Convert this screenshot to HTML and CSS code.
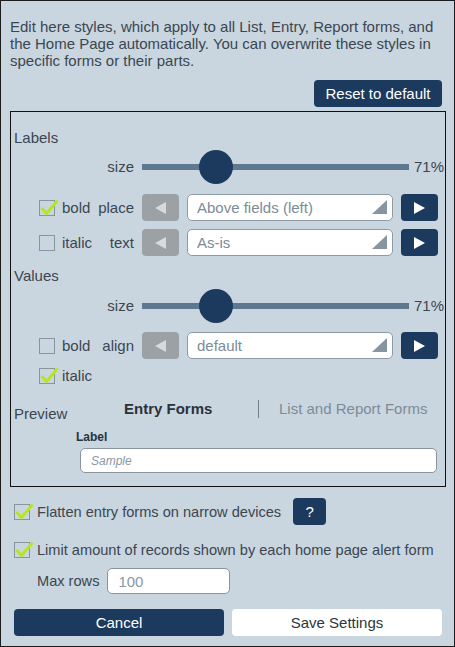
FILE: index.html
```html
<!DOCTYPE html>
<html lang="en">
<head>
  <meta charset="UTF-8" />
  <title>Form styles</title>
  <link rel="stylesheet" href="styles.css">
</head>
<body>

  <div class="panel">
    <p class="intro">Edit here styles, which apply to all List, Entry, Report forms, and the Home Page automatically. You can overwrite these styles in specific forms or their parts.</p>

    <div class="reset-row">
      <button class="btn btn-dark reset">Reset to default</button>
    </div>

    <!-- Styles box -->
    <div class="style-box">
      <div class="group-title">Labels</div>

      <div class="row slider-row">
        <div class="lead"><span class="name">size</span></div>
        <div class="track"><span class="thumb"></span></div>
        <span class="pct">71%</span>
      </div>

      <div class="row row-gap-lg">
        <div class="lead">
          <span class="check">
            <span class="box"><svg viewBox="0 0 16 16"><path d="M2.5 8 L7.5 13.5 L18.5 0.5" /></svg></span>bold
          </span>
          <span class="name">place</span>
        </div>
        <button class="arrow arrow-prev"></button>
        <div class="select">Above fields (left)</div>
        <button class="arrow arrow-next"></button>
      </div>

      <div class="row row-gap-sm">
        <div class="lead">
          <span class="check"><span class="box"></span>italic</span>
          <span class="name">text</span>
        </div>
        <button class="arrow arrow-prev"></button>
        <div class="select">As-is</div>
        <button class="arrow arrow-next"></button>
      </div>

      <div class="group-title values-title">Values</div>

      <div class="row slider-row slider-row-2">
        <div class="lead"><span class="name">size</span></div>
        <div class="track"><span class="thumb"></span></div>
        <span class="pct">71%</span>
      </div>

      <div class="row row-gap-md">
        <div class="lead">
          <span class="check"><span class="box"></span>bold</span>
          <span class="name">align</span>
        </div>
        <button class="arrow arrow-prev"></button>
        <div class="select">default</div>
        <button class="arrow arrow-next"></button>
      </div>

      <div class="row row-italic">
        <div class="lead">
          <span class="check">
            <span class="box"><svg viewBox="0 0 16 16"><path d="M2.5 8 L7.5 13.5 L18.5 0.5" /></svg></span>italic
          </span>
        </div>
      </div>

      <!-- Preview -->
      <div class="preview-head">
        <span class="preview-title">Preview</span>
        <span class="tab tab-active">Entry Forms</span>
        <span class="tab">List and Report Forms</span>
      </div>
      <div class="preview-label">Label</div>
      <input class="preview-input" type="text" placeholder="Sample" />
    </div>

    <!-- Options -->
    <div class="option option-flatten">
      <span class="check">
        <span class="box"><svg viewBox="0 0 16 16"><path d="M2.5 8 L7.5 13.5 L18.5 0.5" /></svg></span>Flatten entry forms on narrow devices
      </span>
      <button class="btn btn-dark help">?</button>
    </div>

    <div class="option option-limit">
      <span class="check">
        <span class="box"><svg viewBox="0 0 16 16"><path d="M2.5 8 L7.5 13.5 L18.5 0.5" /></svg></span>Limit amount of records shown by each home page alert form
      </span>
    </div>

    <div class="max-rows">
      <span>Max rows</span>
      <input class="rows-input" type="text" placeholder="100" />
    </div>

    <div class="actions">
      <button class="btn btn-dark">Cancel</button>
      <button class="btn btn-light">Save Settings</button>
    </div>
  </div>

</body>
</html>
```

FILE: styles.css
```css
/* General */
body, html {
  margin: 0;
  padding: 0;
  font-family: "Liberation Sans", Arial, sans-serif;
  font-size: 15px;
  color: #3b4650;
}

.panel {
  width: 455px;
  height: 647px;
  box-sizing: border-box;
  border: 1px solid #1c1c1c;
  background: #c9d6e0;
  padding: 17px 8px 0 9px;
}

.intro {
  margin: 0;
  width: 425px;
  line-height: 17px;
}

/* Buttons */
.btn {
  font-family: inherit;
  font-size: 15px;
  border: none;
  border-radius: 4px;
  height: 27px;
  padding: 0;
  cursor: pointer;
}
.btn-dark {
  background: #1b3a5e;
  color: #fff;
}
.btn-light {
  background: #fff;
  color: #2c3640;
}

.reset-row {
  display: flex;
  justify-content: flex-end;
  margin-top: 11px;
  padding-right: 4px;
}
.reset {
  width: 128px;
}

/* Styles box */
.style-box {
  margin-top: 4px;
  border: 1px solid #111;
  padding: 17px 0 13px 3px;
}

.group-title {
  line-height: 18px;
}
.values-title {
  margin-top: 11px;
}

.row {
  display: flex;
  align-items: center;
  line-height: 18px;
}
.row-gap-lg { margin-top: 10px; }
.row-gap-sm { margin-top: 8px; }
.row-gap-md { margin-top: 9px; }
.row-italic { margin-top: 8px; }

.lead {
  width: 120px;
  flex: none;
  box-sizing: border-box;
  padding-left: 25px;
  display: flex;
  align-items: center;
}
.lead .name {
  margin-left: auto;
}

/* Checkbox */
.check {
  display: flex;
  align-items: center;
  gap: 7px;
}
.box {
  position: relative;
  width: 16px;
  height: 16px;
  box-sizing: border-box;
  border: 1px solid #8a949c;
  flex: none;
}
.box svg {
  position: absolute;
  left: -1px;
  top: -1px;
  width: 16px;
  height: 16px;
  overflow: visible;
}
.box path {
  fill: none;
  stroke: #b6e61e;
  stroke-width: 3;
}

/* Slider */
.slider-row {
  margin-top: 3px;
  height: 34px;
}
.slider-row-2 {
  margin-top: 4px;
}
.track {
  position: relative;
  flex: none;
  width: 267px;
  height: 6px;
  margin-left: 8px;
  background: #5e7890;
}
.thumb {
  position: absolute;
  left: 57px;
  top: -14px;
  width: 34px;
  height: 34px;
  border-radius: 50%;
  background: #1b3a5e;
}
.pct {
  margin-left: 5px;
}

/* Arrow buttons and selects */
.arrow {
  flex: none;
  width: 37px;
  height: 27px;
  border: none;
  border-radius: 4px;
  padding: 0;
  display: flex;
  align-items: center;
  justify-content: center;
}
.arrow::before {
  content: "";
  border-top: 6px solid transparent;
  border-bottom: 6px solid transparent;
}
.arrow-prev {
  margin-left: 8px;
  background: #9ba1a5;
}
.arrow-prev::before {
  border-right: 11px solid #d6dadd;
}
.arrow-next {
  background: #1b3a5e;
}
.arrow-next::before {
  border-left: 11px solid #fff;
}

.select {
  position: relative;
  flex: none;
  width: 206px;
  height: 27px;
  margin: 0 8px;
  box-sizing: border-box;
  border: 1px solid #8e9aa4;
  border-radius: 5px;
  background: #fff;
  color: #7c8b98;
  padding-left: 9px;
  line-height: 25px;
}
.select::after {
  content: "";
  position: absolute;
  right: 5px;
  bottom: 6px;
  border-left: 15px solid transparent;
  border-bottom: 14px solid #8795a0;
}

/* Preview */
.preview-head {
  display: flex;
  align-items: flex-start;
  margin-top: 15px;
  line-height: 18px;
}
.preview-title {
  width: 110px;
  margin-top: 5px;
}
.tab {
  color: #7c8b98;
  padding-left: 20px;
}
.tab-active {
  width: 135px;
  box-sizing: border-box;
  padding-left: 0;
  border-right: 1px solid #6f7f8c;
  font-weight: bold;
  color: #2a323a;
}
.preview-label {
  margin: 7px 0 0 62px;
  font-size: 12px;
  font-weight: bold;
  line-height: 15px;
  color: #2a323a;
}
.preview-input {
  display: block;
  margin: 3px 0 0 66px;
  width: 357px;
  height: 25px;
  box-sizing: border-box;
  border: 1px solid #8a949c;
  border-radius: 5px;
  padding: 0 0 0 10px;
  font-family: inherit;
  font-size: 12px;
  font-style: italic;
  outline: none;
}
.preview-input::placeholder {
  color: #8a98a4;
}

/* Options */
.option {
  display: flex;
  align-items: center;
  margin-left: 4px;
  line-height: 18px;
  font-size: 14.6px;
}
.option-flatten {
  margin-top: 11px;
  height: 27px;
  gap: 12px;
}
.option-limit {
  margin-top: 16px;
}
.help {
  width: 33px;
}

.max-rows {
  display: flex;
  align-items: center;
  gap: 8px;
  margin: 9px 0 0 27px;
  font-size: 14.6px;
}
.rows-input {
  width: 123px;
  height: 26px;
  box-sizing: border-box;
  border: 1px solid #8a949c;
  border-radius: 5px;
  padding: 0 0 0 10px;
  font-family: inherit;
  font-size: 15px;
  outline: none;
}
.rows-input::placeholder {
  color: #8a98a4;
}

.actions {
  display: grid;
  grid-template-columns: 210px 210px;
  gap: 8px;
  margin: 15px 0 0 4px;
}
```
